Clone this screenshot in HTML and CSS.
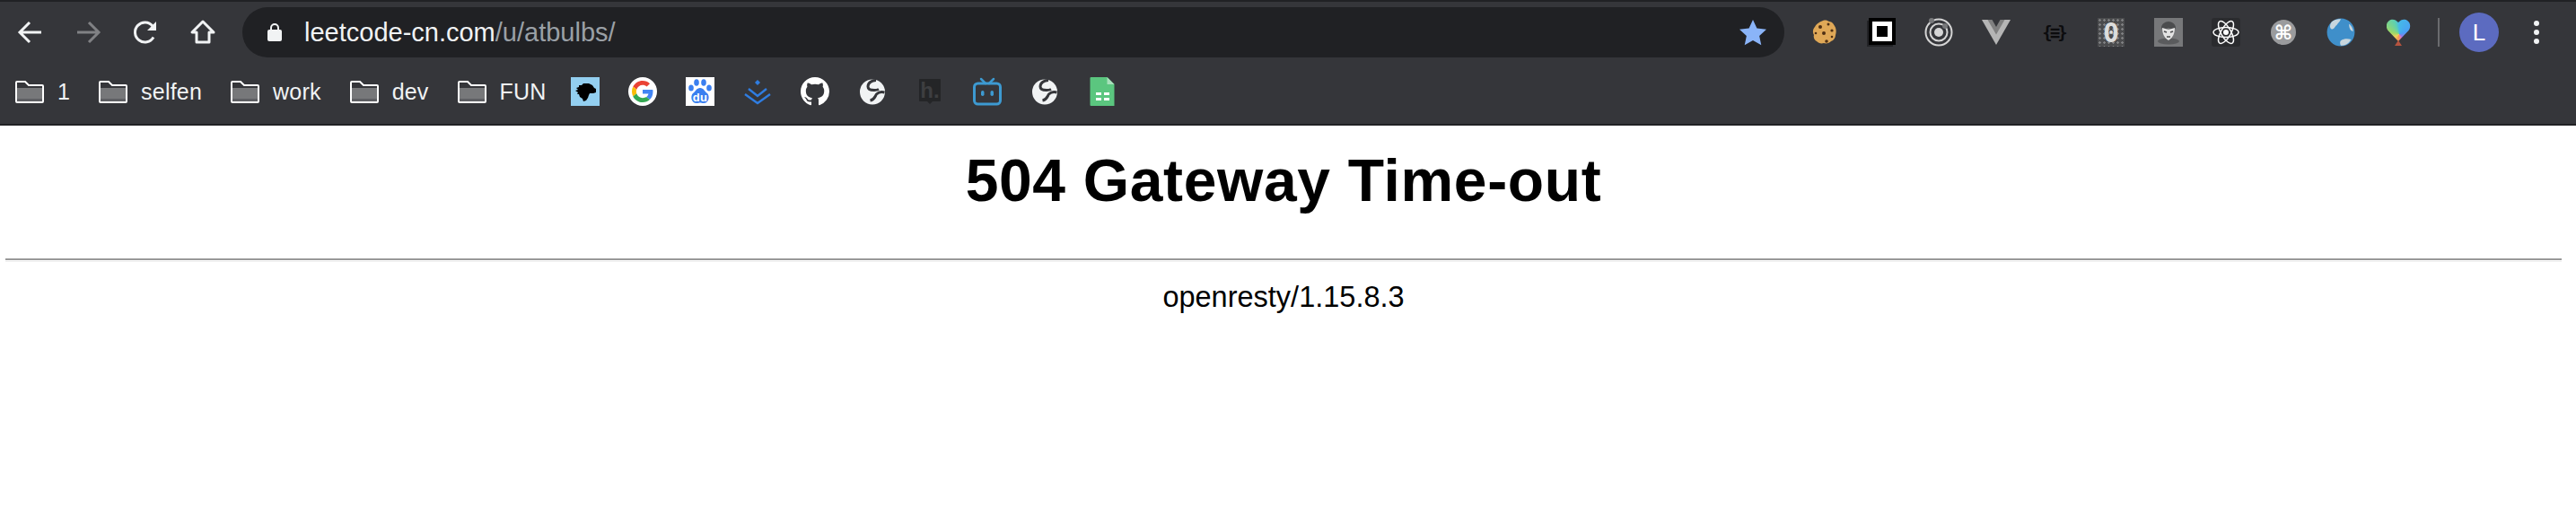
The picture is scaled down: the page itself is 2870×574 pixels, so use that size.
FILE: index.html
```html
<!DOCTYPE html>
<html lang="en">
<head>
    <meta charset="UTF-8">
    <title>504 Gateway Time-out</title>
    <link rel="stylesheet" href="styles.css">
</head>
<body>
    <svg class="defs" width="0" height="0">
        <defs>
            <symbol id="folder" viewBox="0 0 32 25">
                <rect x="2" y="8" width="28" height="15" fill="#77787a"/>
                <rect x="2" y="20" width="28" height="3" fill="#5f6063"/>
                <path d="M1 2a1 1 0 0 1 1-1h9l4 4h15a1 1 0 0 1 1 1v17a1 1 0 0 1-1 1H2a1 1 0 0 1-1-1z" fill="none" stroke="#fff" stroke-width="2"/>
            </symbol>
            <symbol id="globe" viewBox="0 0 32 32">
                <circle cx="16" cy="16.500" r="14" fill="#f1f3f4"/>
                <path d="M20 3.500c-5 0-9 3-9 7 0 3 3 4 7 4 3 0 5-1 5-1" fill="none" stroke="#35363a" stroke-width="3"/>
                <path d="M29.500 17c-4-1-7 0-9 2-2 3-2 6-7 7" fill="none" stroke="#35363a" stroke-width="3"/>
            </symbol>
        </defs>
    </svg>

    <div class="browser">
        <div class="toolbar">
            <div class="nav">
                <span class="slot">
                    <svg class="nav-icon" viewBox="0 0 32 32"><path d="M28 16H5M15 5 4 16l11 11" fill="none" stroke="#f1f3f4" stroke-width="3"/></svg>
                </span>
                <span class="slot">
                    <svg class="nav-icon" viewBox="0 0 32 32"><path d="M4 16h23M17 5l11 11-11 11" fill="none" stroke="#808184" stroke-width="3"/></svg>
                </span>
                <span class="slot">
                    <svg class="nav-icon" viewBox="0 0 32 32"><path d="M25 21.500A11 11 0 1 1 24 9" fill="none" stroke="#f1f3f4" stroke-width="3"/><path d="M28 4v10H18z" fill="#f1f3f4"/></svg>
                </span>
                <span class="slot">
                    <svg class="nav-icon" viewBox="0 0 32 32"><path d="M16 4 4 16h5v11h14V16h5z" fill="none" stroke="#f1f3f4" stroke-width="3" stroke-linejoin="round"/></svg>
                </span>
            </div>
            <div class="omnibox">
                <svg class="lock" viewBox="0 0 16 22"><path d="M4 9V6a4 4 0 0 1 8 0v3" fill="none" stroke="#f1f3f4" stroke-width="2"/><rect y="8" width="16" height="13" rx="2" fill="#f1f3f4"/></svg>
                <span class="url">leetcode-cn.com<span class="url-path">/u/atbulbs/</span></span>
                <svg class="star" viewBox="0 0 32 32"><path d="m16 1 4.700 10.300 11.300 1.300-8.400 7.600 2.300 11.100L16 25.700l-9.900 5.600 2.300-11.100L0 12.600l11.300-1.300z" fill="#8ab4f8"/></svg>
            </div>
            <div class="extensions">
                <span class="slot">
                    <svg class="ext" viewBox="0 0 32 32"><path d="M15 3c3-1 5 0 7 1 3 0 5 3 6 5 2 3 2 7 1 10 0 3-2 6-5 7-2 2-5 3-8 2-3 1-6 0-8-2-2-1-4-4-3-7-2-3-1-7 1-9 1-3 4-5 9-7z" fill="#dfa857"/><g fill="#4e2f14"><circle cx="12" cy="10" r="2"/><circle cx="21" cy="7" r="1.500"/><circle cx="25" cy="14" r="1.600"/><circle cx="16" cy="17" r="2"/><circle cx="25" cy="21" r="1.300"/><circle cx="19" cy="26" r="1.800"/><circle cx="7" cy="17" r="1.300"/></g></svg>
                </span>
                <span class="slot">
                    <svg class="ext" viewBox="0 0 32 32"><rect x="0" y="3" width="29" height="29" fill="#222326"/><rect x="2" y="0" width="30" height="30" fill="#000"/><rect x="6" y="4" width="22" height="22" fill="#fff"/><rect x="11" y="9" width="12" height="12" fill="#000"/></svg>
                </span>
                <span class="slot">
                    <svg class="ext" viewBox="0 0 32 32"><circle cx="16" cy="16" r="14.500" fill="none" stroke="#d5d5d5" stroke-width="2"/><circle cx="16" cy="16" r="9.500" fill="none" stroke="#d5d5d5" stroke-width="2"/><circle cx="16" cy="16" r="5" fill="#d5d5d5"/><circle cx="8" cy="3" r="3" fill="#77787a"/><circle cx="23" cy="9" r="3" fill="#77787a"/></svg>
                </span>
                <span class="slot">
                    <svg class="ext" viewBox="0 0 32 28"><path d="M0 0h32L16 28z" fill="#b5b5b5"/><path d="M6.500 0h19L16 16.500z" fill="#808080"/><path d="M11.500 0h9L16 8z" fill="#35363a"/></svg>
                </span>
                <span class="slot"><span class="json-icon">{≡}</span></span>
                <span class="slot"><span class="zero-icon">0</span></span>
                <span class="slot">
                    <svg class="ext" viewBox="0 0 32 32"><rect width="32" height="32" fill="#77787a"/><ellipse cx="16" cy="26" rx="12" ry="3.500" fill="#5a5b5d"/><path d="M8 11c0-4 4-7 8-7s8 3 8 7l-2 3-6-3-6 3z" fill="#4b4c4e"/><path d="M9 11l7 2 7-2c0 6-2 11-7 14-5-3-7-8-7-14z" fill="#e3e3e3"/><path d="M11 15l3 1M21 15l-3 1M14 21h4" stroke="#4b4c4e" stroke-width="1.500"/></svg>
                </span>
                <span class="slot">
                    <svg class="ext" viewBox="0 0 32 32"><rect width="32" height="32" rx="3" fill="#2a2b2e"/><g fill="none" stroke="#fff" stroke-width="1.500"><ellipse cx="16" cy="16" rx="14" ry="5.500"/><ellipse cx="16" cy="16" rx="14" ry="5.500" transform="rotate(60 16 16)"/><ellipse cx="16" cy="16" rx="14" ry="5.500" transform="rotate(120 16 16)"/></g><circle cx="16" cy="16" r="3" fill="#fff"/></svg>
                </span>
                <span class="slot"><span class="cmd-icon">⌘</span></span>
                <span class="slot">
                    <svg class="ext" viewBox="0 0 28 28"><circle cx="14" cy="14" r="13.500" fill="#3f8fca"/><path d="M5 4c3-3 7-3 9-3-1 3-3 4-4 6-2 1-2 4-5 4-2-1-2-4 0-7zM14 22c3-2 7-2 10-1-2 4-6 6-10 6-1-2-1-4 0-5zM22 6c2 1 4 5 4 7-2 0-4-2-4-7z" fill="#c9d6dd"/></svg>
                </span>
                <span class="slot"><span class="heart-icon"><span class="heart"></span></span></span>
                <span class="divider"></span>
                <span class="slot"><span class="avatar">L</span></span>
                <span class="slot">
                    <span class="dots"><i></i><i></i><i></i></span>
                </span>
            </div>
        </div>

        <div class="bookmarks">
            <div class="folders">
                <span class="folder"><svg class="folder-icon"><use href="#folder"/></svg>1</span>
                <span class="folder"><svg class="folder-icon"><use href="#folder"/></svg>selfen</span>
                <span class="folder"><svg class="folder-icon"><use href="#folder"/></svg>work</span>
                <span class="folder"><svg class="folder-icon"><use href="#folder"/></svg>dev</span>
                <span class="folder"><svg class="folder-icon"><use href="#folder"/></svg>FUN</span>
            </div>
            <div class="favicons">
                <svg class="fav" viewBox="0 0 32 32"><rect width="32" height="32" fill="#93cff0"/><path d="M9 9l3 0 2-2 6 0 4 2 2 3 2 1 0 4-3 1-4 0-1 2-1 3-2 3-3 1-1-3-3-2-1-3-2 0 1-2-3-2 3-1-2-2 3-1z" fill="#000"/></svg>
                <svg class="fav" viewBox="0 0 32 32">
                    <circle cx="16" cy="16" r="16" fill="#fff"/>
                    <g transform="translate(4 4) scale(.5)">
                        <path d="M24 9.500c3.540 0 6.710 1.220 9.210 3.600l6.850-6.850C35.900 2.380 30.470 0 24 0 14.620 0 6.510 5.380 2.560 13.220l7.980 6.190C12.430 13.720 17.740 9.500 24 9.500z" fill="#ea4335"/>
                        <path d="M46.980 24.550c0-1.570-.15-3.090-.38-4.550H24v9.020h12.940c-.58 2.960-2.260 5.480-4.780 7.180l7.730 6c4.510-4.180 7.090-10.360 7.090-17.650z" fill="#4285f4"/>
                        <path d="M10.530 28.590c-.48-1.450-.76-2.990-.76-4.590s.27-3.140.76-4.590l-7.980-6.190C.92 16.460 0 20.120 0 24c0 3.880.92 7.540 2.560 10.780l7.970-6.190z" fill="#fbbc05"/>
                        <path d="M24 48c6.480 0 11.930-2.130 15.890-5.810l-7.730-6c-2.150 1.450-4.920 2.300-8.160 2.300-6.260 0-11.570-4.220-13.470-9.910l-7.980 6.190C6.510 42.620 14.620 48 24 48z" fill="#34a853"/>
                    </g>
                </svg>
                <svg class="fav" viewBox="0 0 32 32">
                    <rect width="32" height="32" fill="#fff"/>
                    <g fill="#3a7ff0">
                        <ellipse cx="6" cy="12" rx="2.800" ry="3.500"/>
                        <ellipse cx="12" cy="6" rx="2.800" ry="3.800"/>
                        <ellipse cx="20" cy="6" rx="2.800" ry="3.800"/>
                        <ellipse cx="26" cy="12" rx="2.800" ry="3.500"/>
                        <path d="M16 12c4 0 5 4 8 6 3 3 2 11-4 11-2 0-3-.5-4-.5s-2 .5-4 .5c-6 0-7-8-4-11 3-2 4-6 8-6z"/>
                    </g>
                    <text class="du" x="16" y="27" text-anchor="middle">du</text>
                </svg>
                <svg class="fav" viewBox="0 0 32 32"><path d="M6 14l10 8 10-8M2 20l14 10 14-10" fill="none" stroke="#2f7de1" stroke-width="2.400" transform="translate(0 -1)"/><path d="m16 3 3 3-3 3-3-3z" fill="#2f7de1"/></svg>
                <svg class="fav" viewBox="0 0 16 16"><path d="M8 0C3.580 0 0 3.580 0 8c0 3.540 2.290 6.530 5.470 7.590.4.070.55-.17.55-.38 0-.19-.01-.82-.01-1.490-2.010.37-2.530-.49-2.690-.94-.09-.23-.48-.94-.82-1.130-.28-.15-.68-.52-.01-.53.63-.01 1.080.58 1.230.82.720 1.210 1.870.87 2.330.66.070-.52.28-.87.51-1.070-1.780-.2-3.640-.89-3.640-3.950 0-.87.31-1.590.82-2.150-.08-.2-.36-1.020.08-2.120 0 0 .67-.21 2.200.82.64-.18 1.320-.27 2-.27.68 0 1.360.09 2 .27 1.530-1.040 2.200-.82 2.200-.82.44 1.100.16 1.920.08 2.120.51.56.82 1.270.82 2.150 0 3.070-1.870 3.750-3.650 3.950.29.25.54.73.54 1.480 0 1.070-.01 1.930-.01 2.200 0 .21.15.46.55.38A8.013 8.013 0 0 0 16 8c0-4.420-3.580-8-8-8z" fill="#fff"/></svg>
                <svg class="fav"><use href="#globe"/></svg>
                <svg class="fav" viewBox="0 0 32 32"><path d="M5 2h22a1 1 0 0 1 1 1v23a1 1 0 0 1-1 1h-8l-3 3-3-3H5a1 1 0 0 1-1-1V3a1 1 0 0 1 1-1z" fill="#242527"/><text class="hn" x="16" y="23" text-anchor="middle">h.</text></svg>
                <svg class="fav" viewBox="0 0 32 32"><path d="m9 2 5 5M23 2l-5 5" stroke="#3d9ad1" stroke-width="2.500" stroke-linecap="round"/><rect x="1.500" y="7" width="29" height="23" rx="4" fill="none" stroke="#3d9ad1" stroke-width="3"/><rect x="9" y="15" width="3.500" height="6" rx="1.700" fill="#3d9ad1"/><rect x="19.500" y="15" width="3.500" height="6" rx="1.700" fill="#3d9ad1"/></svg>
                <svg class="fav"><use href="#globe"/></svg>
                <svg class="fav" viewBox="0 0 32 32"><path d="M3.500 0h18l8 8v24h-26a1 1 0 0 1-1-1V1a1 1 0 0 1 1-1z" fill="#5bc67f"/><path d="M21.500 0l8 8h-8z" fill="#a8e0bb"/><path d="M9 17h6v3H9zM18 17h6v3h-6zM9 23h6v3H9zM18 23h6v3h-6z" fill="#fff"/></svg>
            </div>
        </div>
    </div>

    <div class="page">
        <h1>504 Gateway Time-out</h1>
        <hr class="rule">
        <p class="server">openresty/1.15.8.3</p>
    </div>
</body>
</html>
```

FILE: styles.css
```css
html, body { margin: 0; height: 100%; background: #fff; overflow: hidden; }
body { font-family: "Liberation Sans", Arial, sans-serif; color: #000; }
.defs { position: absolute; }

/* browser chrome */
.browser { background: #35363a; border-top: 2px solid #202124; border-bottom: 2px solid #202124; color: #f1f3f4; }
.toolbar { display: flex; align-items: center; height: 68px; padding: 0 12px 0 2px; }
.slot { display: flex; align-items: center; justify-content: center; width: 64px; flex: none; }
.nav { display: flex; flex: none; margin-right: 12px; }
.nav-icon { width: 32px; height: 32px; }

.omnibox { display: flex; align-items: center; flex: 1; height: 56px; padding: 0 20px 0 28px; border-radius: 28px; background: #202124; }
.lock { width: 16px; height: 22px; margin-right: 25px; }
.url { flex: 1; font-size: 29px; }
.url-path { color: #9aa0a6; }
.star { width: 30px; height: 30px; }

.extensions { display: flex; align-items: center; flex: none; margin-left: 12px; }
.ext { width: 32px; height: 32px; }
.json-icon { font: bold 19px "DejaVu Sans Mono", monospace; color: #0c0c0e; letter-spacing: -3px; }
.zero-icon { display: flex; align-items: center; justify-content: center; width: 30px; height: 32px; background: #4a4b4d radial-gradient(circle, #808183 1px, transparent 1.500px) 0 0 / 5px 5px; color: #dcdcdc; font: bold 30px "DejaVu Sans Mono", monospace; }
.cmd-icon { display: flex; align-items: center; justify-content: center; width: 28px; height: 28px; border-radius: 50%; background: #9a9b9d; color: #fff; font: bold 22px "DejaVu Sans", sans-serif; }
.heart-icon { display: block; position: relative; width: 27px; height: 30px; }
.heart { display: block; width: 27px; height: 25px; background: conic-gradient(from 0deg at 14px 17px, #45b8e8, #4aa0f5 70deg, #8a7be8 125deg, #e07ab8 155deg, #f59a52 190deg, #f2d05a 235deg, #9ad86a 285deg, #5ed0b0 340deg, #45b8e8); clip-path: path("M13.500 25 2 13C-1 9 0 3 5 1c3-1 6 0 8.500 3C16 1 19 0 22 1c5 2 6 8 3 12z"); }
.heart-icon::after { content: ""; position: absolute; left: 9px; bottom: 0; border: 4px solid transparent; border-top: 0; border-bottom: 6px solid #b5533f; }
.divider { width: 2px; height: 32px; margin: 0 12px; background: #6a6b6e; flex: none; }
.avatar { display: flex; align-items: center; justify-content: center; width: 44px; height: 44px; border-radius: 50%; background: #5c6bc0; color: #fff; font-size: 26px; }
.dots { display: flex; flex-direction: column; gap: 4px; }
.dots i { display: block; width: 6px; height: 6px; border-radius: 50%; background: #f1f3f4; }

/* bookmarks bar */
.bookmarks { display: flex; align-items: center; box-sizing: border-box; height: 68px; padding: 0 0 4px 17px; font-size: 25px; letter-spacing: .2px; }
.folders { display: flex; align-items: center; gap: 32px; }
.folder { display: flex; align-items: center; gap: 15px; }
.folder-icon { width: 32px; height: 25px; }
.favicons { display: flex; align-items: center; gap: 32px; margin-left: 27px; }
.fav { width: 32px; height: 32px; flex: none; }
.du { font: bold 13px "Liberation Sans", sans-serif; fill: #fff; }
.hn { font: bold 24px "Liberation Sans", sans-serif; fill: #3d3e40; }

/* error page */
.page { padding: 0 16px 0 6px; }
.page h1 { margin: 0; padding-top: 28px; text-align: center; font-size: 66px; letter-spacing: .65px; line-height: 66px; font-weight: bold; }
.rule { height: 1px; margin: 54px 0 0; border: 0; border-top: 2px solid #999; border-bottom: 1px solid #eee; }
.server { margin: 20px 0 0; text-align: center; font-size: 32.500px; line-height: 38px; }
```
